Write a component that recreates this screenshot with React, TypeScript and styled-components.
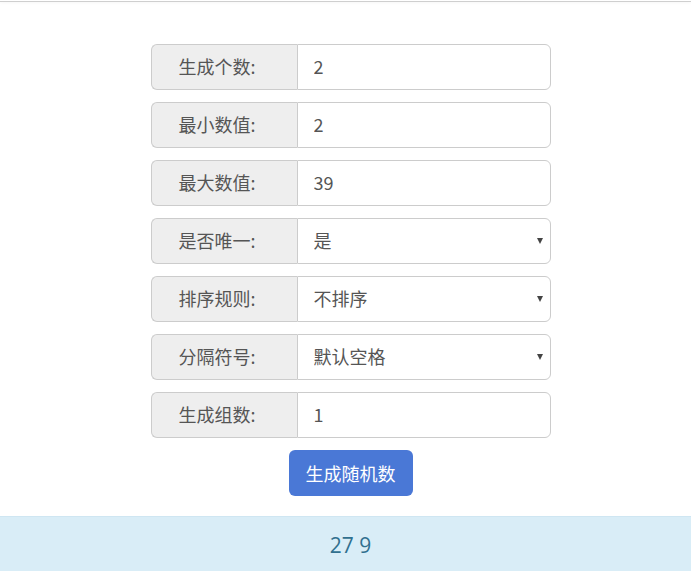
import React from "react";
import styled, { createGlobalStyle } from "styled-components";

const GlobalStyle = createGlobalStyle`
  html, body {
    margin: 0;
    padding: 0;
    background: #fff;
    font-family: "Noto Sans CJK SC", "Noto Sans", sans-serif;
    color: #555;
  }
  * {
    box-sizing: border-box;
  }
`;

const TopRule = styled.div`
  height: 2px;
  border-bottom: 1px solid #cfcfcf;
  box-shadow: 0 1px 3px rgba(0, 0, 0, 0.04);
`;

const Page = styled.div`
  padding-left: 10px;
`;

const Form = styled.form`
  width: 400px;
  margin: 0 auto;
  padding-top: 42px;
  display: flex;
  flex-direction: column;
  gap: 12px;
`;

const Group = styled.div`
  display: flex;
  height: 46px;
  position: relative;
`;

const Addon = styled.span`
  flex: 0 0 146px;
  display: flex;
  align-items: center;
  justify-content: center;
  padding: 0 14px 2px 0;
  background: #eee;
  border: 1px solid #ccc;
  border-right: 0;
  border-radius: 6px 0 0 6px;
  font-size: 18px;
  color: #555;
`;

const Field = styled.input`
  flex: 1;
  min-width: 0;
  height: 46px;
  padding: 0 16px 2px;
  border: 1px solid #ccc;
  border-radius: 0 6px 6px 0;
  font-family: "Noto Sans CJK SC", "Noto Sans", sans-serif;
  font-size: 18px;
  color: #555;
  background: #fff;
  outline: none;
`;

const Picker = styled.select`
  flex: 1;
  min-width: 0;
  height: 46px;
  padding: 0 30px 2px 16px;
  border: 1px solid #ccc;
  border-radius: 0 6px 6px 0;
  font-family: "Noto Sans CJK SC", "Noto Sans", sans-serif;
  font-size: 18px;
  color: #555;
  background: #fff;
  appearance: none;
  -webkit-appearance: none;
  outline: none;
`;

const Caret = styled.span`
  position: absolute;
  right: 8px;
  top: 20px;
  width: 0;
  height: 0;
  border-left: 3px solid transparent;
  border-right: 3px solid transparent;
  border-top: 6px solid #444;
  pointer-events: none;
`;

const Actions = styled.div`
  display: flex;
  justify-content: center;
`;

const Submit = styled.button`
  width: 124px;
  height: 46px;
  padding-bottom: 2px;
  border: 0;
  border-radius: 6px;
  background: #4a78d6;
  color: #fff;
  font-family: "Noto Sans CJK SC", "Noto Sans", sans-serif;
  font-size: 18px;
  cursor: pointer;
`;

const Result = styled.div`
  margin-top: 20px;
  height: 56px;
  padding-left: 10px;
  display: flex;
  align-items: center;
  justify-content: center;
  background: #d9edf7;
  border-top: 1px solid #cfe6f2;
  color: #31708f;
  font-family: "Open Sans", "Noto Sans", sans-serif;
  font-size: 21px;
`;

type Row =
  | { label: string; kind: "input"; value: string }
  | { label: string; kind: "select"; value: string; options: string[] };

const rows: Row[] = [
  { label: "生成个数:", kind: "input", value: "2" },
  { label: "最小数值:", kind: "input", value: "2" },
  { label: "最大数值:", kind: "input", value: "39" },
  { label: "是否唯一:", kind: "select", value: "是", options: ["是", "否"] },
  { label: "排序规则:", kind: "select", value: "不排序", options: ["不排序", "从小到大", "从大到小"] },
  { label: "分隔符号:", kind: "select", value: "默认空格", options: ["默认空格", "逗号", "换行"] },
  { label: "生成组数:", kind: "input", value: "1" },
];

const App: React.FC = () => {
  return (
    <>
      <GlobalStyle />
      <TopRule />
      <Page>
        <Form onSubmit={(e) => e.preventDefault()}>
          {rows.map((row) => (
            <Group key={row.label}>
              <Addon>{row.label}</Addon>
              {row.kind === "input" ? (
                <Field defaultValue={row.value} />
              ) : (
                <>
                  <Picker defaultValue={row.value}>
                    {row.options.map((o) => (
                      <option key={o}>{o}</option>
                    ))}
                  </Picker>
                  <Caret />
                </>
              )}
            </Group>
          ))}
          <Actions>
            <Submit type="submit">生成随机数</Submit>
          </Actions>
        </Form>
      </Page>
      <Result>27 9</Result>
    </>
  );
};

export default App;
